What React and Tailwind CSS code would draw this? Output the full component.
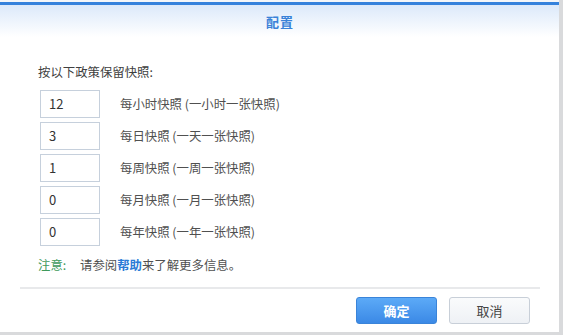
const rows = [
  { value: "12", label: "每小时快照 (一小时一张快照)" },
  { value: "3", label: "每日快照 (一天一张快照)" },
  { value: "1", label: "每周快照 (一周一张快照)" },
  { value: "0", label: "每月快照 (一月一张快照)" },
  { value: "0", label: "每年快照 (一年一张快照)" },
];

const App = () => {
  return (
    <div
      className="w-[563px] h-[335px] bg-[#d9dadc] overflow-hidden"
      style={{ fontFamily: '"Noto Sans CJK SC", "Noto Sans", sans-serif' }}
    >
      <div className="h-[2px] bg-[#f4f6f9] w-[559px]" />
      <div className="w-[559px] h-[330px] bg-white flex flex-col">
        {/* Header */}
        <div className="h-[3px] bg-[#3582dc]" />
        <div className="h-[32px] bg-gradient-to-b from-[#dce9fa] to-white flex items-center justify-center pl-[1px]">
          <span className="text-[13px] font-bold text-[#3a82d8] tracking-[1px] leading-none">配置</span>
        </div>

        {/* Body */}
        <div className="flex-1 px-[38px] pt-[27px] text-[12.4px] text-[#404040]">
          <div className="leading-[16px]">按以下政策保留快照:</div>
          <div className="mt-[10px] flex flex-col gap-[4px]">
            {rows.map((r, i) => (
              <div key={i} className="flex items-center ml-[2px]">
                <div className="w-[60px] h-[28px] border border-[#c6d0dc] flex items-center pl-[8px] text-[13px] text-[#333]">
                  {r.value}
                </div>
                <span className="ml-[20px] text-[#505050]">{r.label}</span>
              </div>
            ))}
          </div>
          <div className="mt-[11px] flex items-center leading-[16px]">
            <span className="text-[#3f9a5c] w-[42px]">注意:</span>
            <span className="text-[#505050]">
              请参阅<span className="text-[#2a7bd6] font-bold">帮助</span>来了解更多信息。
            </span>
          </div>
        </div>

        {/* Footer */}
        <div className="mx-[20px] h-[2px] bg-[#e8e9eb] w-[520px]" />
        <div className="flex justify-end gap-[12px] pr-[29px] pt-[8px] pb-[8px]">
          <button className="w-[81px] h-[27px] rounded-[3px] bg-gradient-to-b from-[#5caaf7] to-[#3b89e6] border border-[#3a84d9] text-white text-[13px] font-bold">
            确定
          </button>
          <button className="w-[81px] h-[27px] rounded-[3px] bg-gradient-to-b from-[#fafbfc] to-[#eef1f5] border border-[#c8cfd8] text-[#444] text-[13px]">
            取消
          </button>
        </div>
      </div>
    </div>
  );
};

export default App;
